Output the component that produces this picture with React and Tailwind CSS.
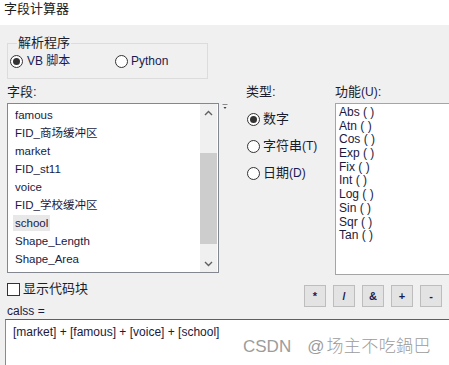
const fields = [
  'famous',
  'FID_商场缓冲区',
  'market',
  'FID_st11',
  'voice',
  'FID_学校缓冲区',
  'school',
  'Shape_Length',
  'Shape_Area',
]

const funcs = ['Abs ( )', 'Atn ( )', 'Cos ( )', 'Exp ( )', 'Fix ( )', 'Int ( )', 'Log ( )', 'Sin ( )', 'Sqr ( )', 'Tan ( )']

function Radio({ checked }) {
  return (
    <span className="w-[13px] h-[13px] rounded-full border border-[#333] bg-white flex items-center justify-center shrink-0">
      {checked && <span className="w-[7px] h-[7px] rounded-full bg-[#333]" />}
    </span>
  )
}

function Chevron({ down }) {
  return (
    <svg width="9" height="6" viewBox="0 0 9 6" fill="none" stroke="#606060" strokeWidth="1.4">
      {down ? <polyline points="1,1 4.5,4.5 8,1" /> : <polyline points="1,5 4.5,1.5 8,5" />}
    </svg>
  )
}

export default function App() {
  return (
    <div className="relative w-[449px] h-[365px] overflow-hidden bg-[#f0f0f0] text-[#1c1c2c] font-['Liberation_Sans','Noto_Sans_CJK_SC',sans-serif]">
      {/* title */}
      <div className="h-[25px] bg-white pl-[4px] text-[13px] leading-[18px] text-[#202020]">字段计算器</div>

      {/* parser group */}
      <fieldset className="ml-[7px] mt-[10px] w-[201px] border border-[#dcdcdc]">
        <legend className="ml-[9px] px-[1px] text-[13px] leading-[16px]">解析程序</legend>
        <div className="flex items-center h-[14px] mt-[3px] mb-[10px] text-[12px] text-[#1a1a50]">
          <div className="flex items-center gap-[4px] w-[105px] ml-[2px]">
            <Radio checked />
            <span>VB 脚本</span>
          </div>
          <div className="flex items-center gap-[3px]">
            <Radio />
            <span>Python</span>
          </div>
        </div>
      </fieldset>

      {/* main row */}
      <div className="flex mt-[5px]">
        <div className="ml-[7px] w-[239px] shrink-0">
          <div className="h-[16px] leading-[16px] text-[13px] mb-[3px]">字段:</div>
          <div className="flex items-start">
            <div className="w-[212px] h-[170px] shrink-0 border border-[#828790] bg-white flex">
              <div className="flex-1 pt-[2px] text-[11.5px] text-[#1a1a40]">
                {fields.map((f) => (
                  <div key={f} className="h-[18px] flex items-center">
                    <span
                      className={
                        'ml-[5px] px-[2px] h-[16px] leading-[16px] ' + (f === 'school' ? 'bg-[#e8e8e8]' : '')
                      }
                    >
                      {f}
                    </span>
                  </div>
                ))}
              </div>
              <div className="w-[17px] mr-[1px] bg-[#f0f0f0] flex flex-col">
                <div className="h-[17px] flex items-center justify-center">
                  <Chevron />
                </div>
                <div className="h-[32px]" />
                <div className="h-[91px] bg-[#cdcdcd]" />
                <div className="flex-1" />
                <div className="h-[17px] flex items-center justify-center">
                  <Chevron down />
                </div>
              </div>
            </div>
            <svg className="ml-[3px] mt-[1px]" width="6" height="7" viewBox="0 0 6 7">
              <rect x="0.5" y="0" width="5" height="1" fill="#8a8a8a" />
              <polygon points="1.5,3 4.5,3 3,5" fill="#404040" />
            </svg>
          </div>
        </div>

        <div className="w-[89px] shrink-0">
          <div className="h-[16px] leading-[16px] text-[13px] mb-[3px]">类型:</div>
          <div className="pt-[9px] pl-[1px] flex flex-col gap-[13px] text-[13px]">
            <div className="flex items-center gap-[3px] h-[14px]">
              <Radio checked />
              <span>数字</span>
            </div>
            <div className="flex items-center gap-[3px] h-[14px]">
              <Radio />
              <span>
                字符串<span className="text-[12px] text-[#1a1a50]">(T)</span>
              </span>
            </div>
            <div className="flex items-center gap-[3px] h-[14px]">
              <Radio />
              <span>
                日期<span className="text-[12px] text-[#1a1a50]">(D)</span>
              </span>
            </div>
          </div>
        </div>

        <div className="shrink-0">
          <div className="h-[16px] leading-[16px] text-[13px] mb-[3px]">
            功能<span className="text-[12px] text-[#1a1a50]">(U)</span>:
          </div>
          <div className="w-[130px] h-[172px] bg-white border-l border-t border-b border-[#a5a5a5] pt-[2px] pl-[3px] text-[12px] text-[#1a1a40]">
            {funcs.map((f) => (
              <div key={f} className="h-[13.7px] leading-[13.7px]">
                {f}
              </div>
            ))}
          </div>
        </div>
      </div>

      {/* code block row */}
      <div className="flex mt-[6px]">
        <div className="ml-[7px]">
          <div className="h-[16px] flex items-center">
            <span className="w-[13px] h-[13px] border border-[#333] bg-white" />
            <span className="ml-[3px] text-[13px] leading-[16px]">显示代码块</span>
          </div>
          <div className="mt-[6px] h-[16px] leading-[16px] text-[12px] text-[#1a1a40]">calss =</div>
        </div>
        <div className="ml-auto mr-[7px] mt-[4px] flex gap-[7px] text-[11px] font-bold text-[#1a1a50]">
          {['*', '/', '&', '+', '-'].map((b) => (
            <div
              key={b}
              className="w-[22px] h-[22px] border border-[#bdbdbd] bg-[#e3e3e3] flex items-center justify-center"
            >
              {b}
            </div>
          ))}
        </div>
      </div>

      {/* expression box */}
      <div className="ml-[5px] h-[60px] bg-white border-t border-t-[#0078d7] border-l border-l-[#8a8a8a] pl-[7px] pt-[4px] text-[12px] leading-[16px] text-[#1a1a40]">
        [market] + [famous] + [voice] + [school]
      </div>

      {/* watermark */}
      <div className="absolute left-[243px] top-[336px] flex text-[17px] leading-[22px] text-[#9c9c9c] font-light">
        <span>CSDN</span>
        <span className="ml-[16px]">@</span>
        <span className="ml-[2px] tracking-[0.4px]">场主不吃鍋巴</span>
      </div>
    </div>
  )
}
